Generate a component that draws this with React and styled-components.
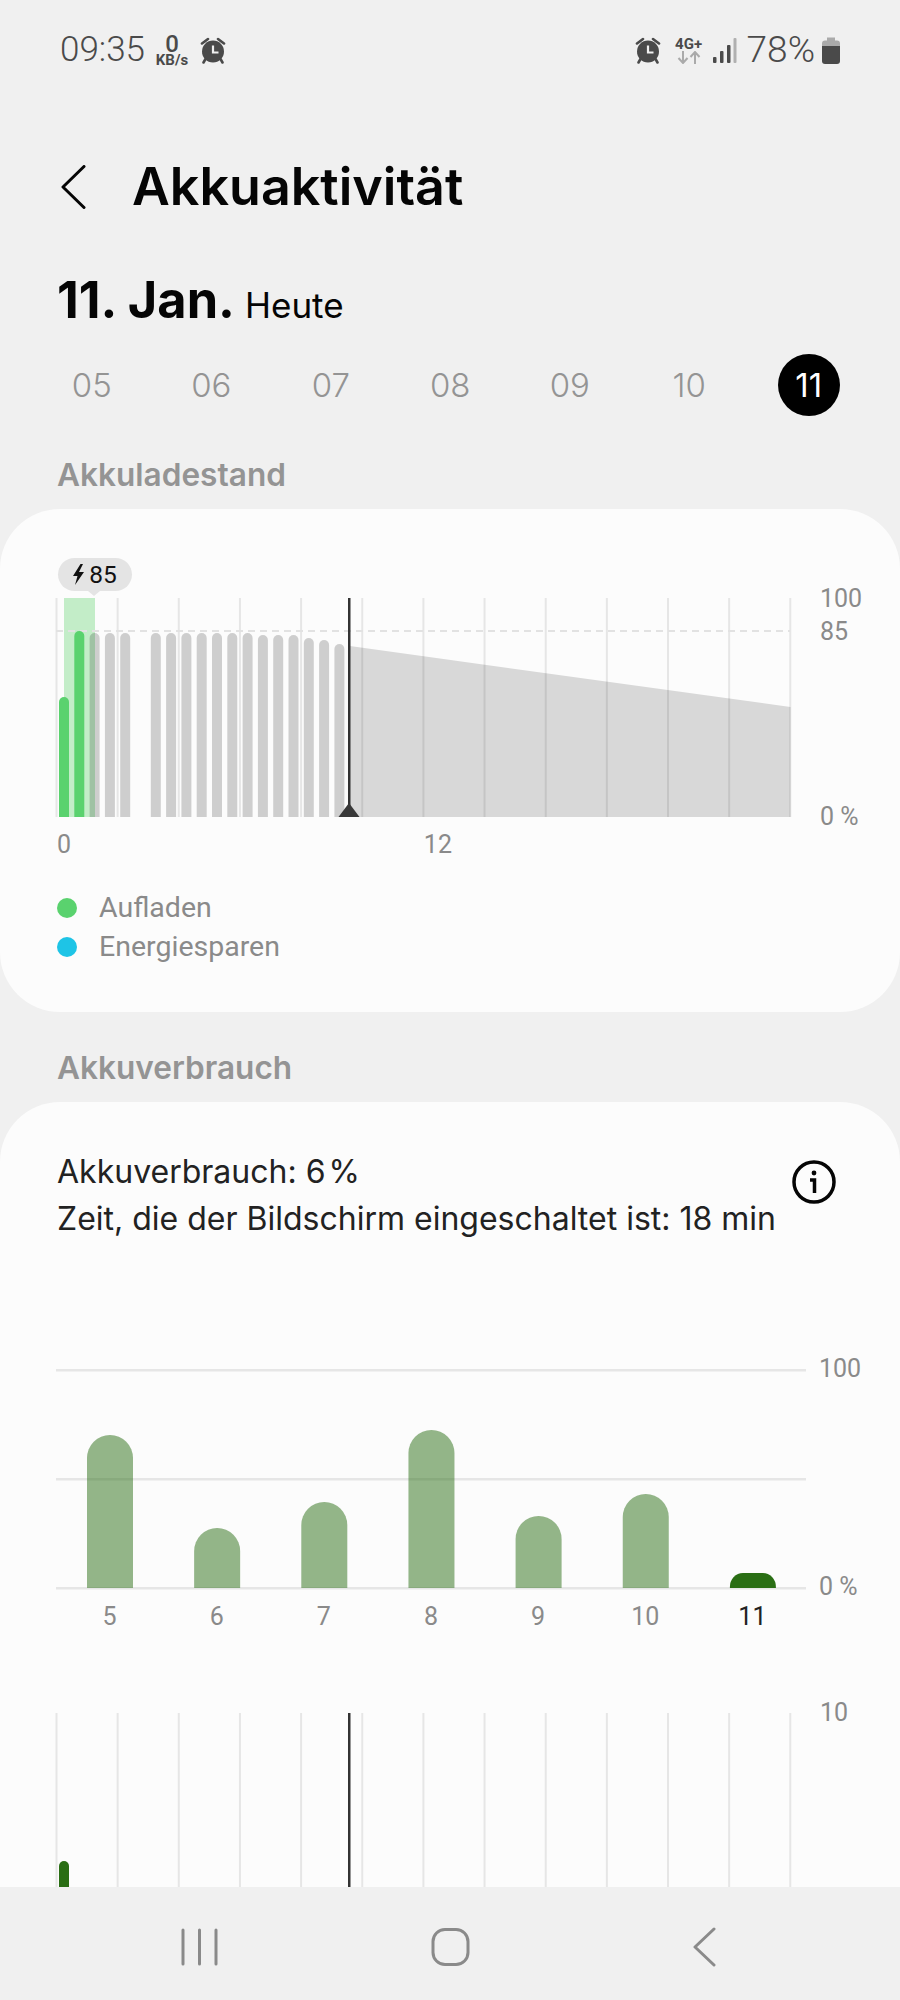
import styled, { createGlobalStyle } from "styled-components";

const GlobalStyle = createGlobalStyle`
  html, body {
    margin: 0;
    padding: 0;
    background: #f0f0f0;
  }
  * {
    box-sizing: border-box;
  }
`;

const Page = styled.div`
  width: 900px;
  height: 2000px;
  display: flex;
  flex-direction: column;
  background: #f0f0f0;
  font-family: Inter, "Liberation Sans", sans-serif;
  overflow: hidden;
`;
const Main = styled.main`
  flex: 1;
  min-height: 0;
  overflow: hidden;
`;

const StatusBar = styled.div`
  height: 100px;
  padding: 0 60px;
  display: flex;
  justify-content: space-between;
  align-items: center;
  color: #4a4a4a;
  font-family: Roboto, sans-serif;
`;
const StatusGroup = styled.div`
  display: flex;
  align-items: center;
`;
const StatusText = styled.span`
  font-size: 35px;
  line-height: 40px;
  font-weight: 300;
`;
const Percent = styled(StatusText)`
  margin-left: 10px;
  font-size: 37px;
`;
const Speed = styled.div`
  width: 34px;
  margin: 0 11px 0 10px;
  display: flex;
  flex-direction: column;
  align-items: center;
  font-weight: 700;
  font-size: 15px;
  line-height: 12px;
  b {
    font-size: 24px;
    line-height: 20px;
    font-weight: 500;
  }
`;
const Network = styled.div`
  width: 30px;
  margin: 0 9px 0 13px;
  display: flex;
  flex-direction: column;
  align-items: center;
  font-size: 15px;
  line-height: 14px;
  font-weight: 700;
`;

const Header = styled.header`
  height: 72px;
  margin-top: 51px;
  padding-left: 60px;
  display: flex;
  align-items: center;
  gap: 46px;
`;
const Title = styled.h1`
  margin: 0;
  font-size: 52px;
  line-height: 72px;
  font-weight: 600;
  color: #050505;
`;
const DateRow = styled.div`
  height: 56px;
  margin-top: 49px;
  padding-left: 57px;
  display: flex;
  align-items: baseline;
  gap: 10px;
  color: #050505;
`;
const DateText = styled.span`
  font-size: 50.5px;
  line-height: 56px;
  font-weight: 700;
`;
const DateNote = styled.span`
  font-size: 35px;
  line-height: 56px;
`;
const Days = styled.div`
  height: 62px;
  margin-top: 26px;
  padding-left: 32px;
  display: grid;
  grid-template-columns: repeat(7, 119.5px);
  align-items: center;
  justify-items: center;
`;
const Day = styled.span`
  width: 62px;
  height: 62px;
  display: flex;
  align-items: center;
  justify-content: center;
  border-radius: 50%;
  font-size: 33px;
  font-weight: ${(p) => (p.$active ? 400 : 300)};
  color: ${(p) => (p.$active ? "#fff" : "#949494")};
  background: ${(p) => (p.$active ? "#000" : "transparent")};
`;
const SectionTitle = styled.h2`
  height: 40px;
  margin: ${(p) => p.$top}px 0 ${(p) => p.$bottom}px;
  padding-left: 57px;
  font-size: 31.6px;
  line-height: 40px;
  font-weight: 600;
  color: #949494;
`;
const Card = styled.section`
  height: ${(p) => p.$height}px;
  padding-top: ${(p) => p.$pad}px;
  background: #fcfcfc;
  border-radius: 60px;
`;
const ChartRow = styled.div`
  margin-top: ${(p) => p.$top || 0}px;
  padding-left: 56px;
  display: flex;
  align-items: flex-start;
`;
const ChartBox = styled.div`
  position: relative;
  flex: none;
  width: ${(p) => p.$width}px;
  svg {
    display: block;
    overflow: visible;
  }
`;
const Tooltip = styled.div`
  position: absolute;
  left: 2px;
  top: -40px;
  width: 74px;
  height: 33px;
  display: flex;
  align-items: center;
  justify-content: center;
  gap: 5px;
  border-radius: 17px;
  background: #e4e4e4;
  color: #111;
  font-family: Roboto, sans-serif;
  font-size: 24.5px;
  &::after {
    content: "";
    position: absolute;
    left: 30px;
    bottom: -5px;
    border-left: 6px solid transparent;
    border-right: 6px solid transparent;
    border-top: 5px solid #e4e4e4;
  }
`;
const YAxis = styled.div`
  height: ${(p) => p.$height}px;
  margin: ${(p) => p.$top}px 0 0 ${(p) => p.$left}px;
  display: flex;
  flex-direction: column;
`;
const AxisLabel = styled.span`
  font-family: Roboto, sans-serif;
  font-size: 25px;
  line-height: 30px;
  color: #8a8a8a;
  margin-top: ${(p) => (p.$push ? "auto" : `${p.$gap || 0}px`)};
`;
const HoursAxis = styled.div`
  margin-top: -2px;
  padding-left: 57px;
  display: grid;
  grid-template-columns: repeat(12, 61.15px);
`;
const HourLabel = styled(AxisLabel)`
  grid-column: ${(p) => p.$col};
`;
const Legend = styled.ul`
  margin: 28px 0 0;
  padding: 0 0 0 57px;
  list-style: none;
`;
const LegendItem = styled.li`
  height: 39px;
  display: flex;
  align-items: center;
  gap: 22px;
  font-family: Roboto, sans-serif;
  font-size: 28.5px;
  color: #8a8a8a;
  &::before {
    content: "";
    width: 20px;
    height: 20px;
    border-radius: 50%;
    background: ${(p) => p.$color};
  }
`;
const UsageHead = styled.div`
  padding: 0 64px 0 57px;
  display: flex;
  justify-content: space-between;
  align-items: flex-start;
`;
const UsageText = styled.p`
  margin: 0;
  font-size: 32px;
  line-height: 47px;
  color: #222;
`;
const InfoIcon = styled.svg`
  flex: none;
  margin-top: 12px;
`;
const WeekAxis = styled.div`
  width: 750px;
  margin: 0 0 0 56px;
  display: grid;
  grid-template-columns: repeat(7, 1fr);
  justify-items: center;
`;
const WeekLabel = styled(AxisLabel)`
  color: ${(p) => (p.$active ? "#222" : "#8a8a8a")};
`;

const NavBar = styled.nav`
  flex: none;
  height: 113px;
  padding: 7px 0 0 181px;
  display: flex;
  align-items: center;
  background: #f0f0f0;
`;
const NavSlot = styled.div`
  width: ${(p) => p.$width}px;
  display: flex;
`;
const BatterySvg = styled.svg`
  margin-left: 7px;
`;

const GREY_INK = "#4a4a4a";
const GRID = "#e6e6e6";
const CHART_W = 736;
const CHART_H = 219;
const gridX = Array.from({ length: 13 }, (_, i) => 0.5 + i * 61.15);

// top of each bar in the charge chart, counted from the chart's top
const chargeBars = [99, 33, 35, 35, 35, null, 35, 35, 35, 35, 35, 35, 35, 37, 37, 37, 40, 42, 46];

const weekBars = [
  { label: "5", top: 67 },
  { label: "6", top: 160 },
  { label: "7", top: 134 },
  { label: "8", top: 62 },
  { label: "9", top: 148 },
  { label: "10", top: 126 },
  { label: "11", top: 205, active: true },
];

const topRounded = (x, y, w, bottom, rx, ry) =>
  `M${x} ${bottom}V${y + ry}A${rx} ${ry} 0 0 1 ${x + rx} ${y}H${x + w - rx}A${rx} ${ry} 0 0 1 ${x + w} ${y + ry}V${bottom}Z`;

const AlarmIcon = () => (
  <svg width="26" height="27" viewBox="0 0 26 27">
    <circle cx="13" cy="14.5" r="11" fill={GREY_INK} />
    <path d="M18 2l6 4.5M8 2L2 6.5M5.5 22l-2 3.5M20.5 22l2 3.5" stroke={GREY_INK} strokeWidth="2.6" strokeLinecap="round" />
    <path d="M13 8.5V15.5h5.5" fill="none" stroke="#f0f0f0" strokeWidth="2.2" />
  </svg>
);

const NetworkArrows = () => (
  <svg width="28" height="13" viewBox="0 0 28 13">
    <path d="M8 0v11M3.5 7l4.5 5 4.5-5M20 13V2M15.5 6L20 1l4.5 5" fill="none" stroke="#aaa" strokeWidth="2" />
  </svg>
);

const SignalIcon = () => (
  <svg width="24" height="25" viewBox="0 0 24 25">
    <rect x="0" y="19" width="3.5" height="6" rx="1" fill={GREY_INK} />
    <rect x="7" y="13" width="3.5" height="12" rx="1" fill={GREY_INK} />
    <rect x="14" y="7" width="3.5" height="18" rx="1" fill={GREY_INK} />
    <rect x="20.5" y="0" width="3" height="25" rx="1" fill="#b0b0b0" />
  </svg>
);

const BatteryIcon = () => (
  <BatterySvg width="18" height="27" viewBox="0 0 18 27">
    <path d="M5 0.5h8v3h2a3 3 0 0 1 3 3V10H0V6.5a3 3 0 0 1 3-3h2z" fill="#aaa" />
    <path d="M0 9h18v15a3 3 0 0 1-3 3H3a3 3 0 0 1-3-3z" fill={GREY_INK} />
  </BatterySvg>
);

const BackIcon = () => (
  <svg width="26" height="44" viewBox="0 0 26 44">
    <path d="M24 1.5L3 22l21 20.5" fill="none" stroke="#050505" strokeWidth="3" strokeLinecap="round" strokeLinejoin="round" />
  </svg>
);

const BoltIcon = () => (
  <svg width="11" height="21" viewBox="0 0 11 21">
    <path d="M7.5 0L0 12h4.5L2 21 11 8H6L10 0z" fill="#111" />
  </svg>
);

const ChargeChart = () => (
  <svg width={CHART_W} height={CHART_H} viewBox={`0 0 ${CHART_W} ${CHART_H}`}>
    {gridX.map((x) => (
      <rect key={x} x={x - 1} y="0" width="2" height={CHART_H} fill={GRID} />
    ))}
    <rect x="8" y="0" width="31" height={CHART_H} fill="#c3edc8" />
    <line x1="0" y1="33" x2="734" y2="33" stroke="#e2e2e2" strokeWidth="2" strokeDasharray="7 5" />
    {chargeBars.map((top, i) =>
      top === null ? null : (
        <path
          key={i}
          d={topRounded(3 + i * 15.3, top, 10, CHART_H, 5, 5)}
          fill={i < 2 ? "#5ad26e" : "rgba(0,0,0,0.18)"}
        />
      )
    )}
    <path d="M294 48L734.5 109V219H294z" fill="rgba(0,0,0,0.14)" />
    <rect x="292" y="0" width="2.5" height={CHART_H} fill="#333" />
    <path d="M293 205l10.5 14h-21z" fill="#383838" />
  </svg>
);

const WeekChart = () => (
  <svg width="750" height="224" viewBox="0 0 750 224">
    {[2, 111, 220].map((y) => (
      <rect key={y} x="0" y={y - 1} width="750" height="2.5" fill={GRID} />
    ))}
    {weekBars.map((bar, i) => (
      <path
        key={bar.label}
        d={topRounded(31 + i * 107.15, bar.top, 46, 220, bar.active ? 13 : 23, bar.active ? 14 : 23)}
        fill={bar.active ? "#2a6e14" : "rgba(42,110,20,0.5)"}
      />
    ))}
  </svg>
);

const ScreenChart = () => (
  <svg width={CHART_W} height="176" viewBox={`0 0 ${CHART_W} 176`}>
    {gridX.map((x) => (
      <rect key={x} x={x - 1} y="0" width="2" height="176" fill={GRID} />
    ))}
    <path d={topRounded(3, 148, 10, 176, 5, 5)} fill="#2a6e14" />
    <rect x="292" y="0" width="2.5" height="176" fill="#333" />
  </svg>
);

const NavIcon = ({ children, width }) => (
  <svg width={width} height="40" viewBox={`0 0 ${width} 40`}>
    <g fill="none" stroke="#8a8a8a" strokeWidth="3" strokeLinecap="round" strokeLinejoin="round">
      {children}
    </g>
  </svg>
);

const App = () => {
  return (
    <Page>
      <GlobalStyle />
      <Main>
        <StatusBar>
          <StatusGroup>
            <StatusText>09:35</StatusText>
            <Speed>
              <b>0</b>
              KB/s
            </Speed>
            <AlarmIcon />
          </StatusGroup>
          <StatusGroup>
            <AlarmIcon />
            <Network>
              4G+
              <NetworkArrows />
            </Network>
            <SignalIcon />
            <Percent>78%</Percent>
            <BatteryIcon />
          </StatusGroup>
        </StatusBar>

        <Header>
          <BackIcon />
          <Title>Akkuaktivität</Title>
        </Header>
        <DateRow>
          <DateText>11. Jan.</DateText>
          <DateNote>Heute</DateNote>
        </DateRow>
        <Days>
          {["05", "06", "07", "08", "09", "10"].map((d) => (
            <Day key={d}>{d}</Day>
          ))}
          <Day $active>11</Day>
        </Days>

        <SectionTitle $top={39} $bottom={14}>
          Akkuladestand
        </SectionTitle>
        <Card $height={503} $pad={89}>
          <ChartRow>
            <ChartBox $width={CHART_W}>
              <Tooltip>
                <BoltIcon />
                85
              </Tooltip>
              <ChargeChart />
            </ChartBox>
            <YAxis $height={248.5} $top={-14.5} $left={28}>
              <AxisLabel>100</AxisLabel>
              <AxisLabel $gap={3}>85</AxisLabel>
              <AxisLabel $push>0 %</AxisLabel>
            </YAxis>
          </ChartRow>
          <HoursAxis>
            <HourLabel $col={1}>0</HourLabel>
            <HourLabel $col={7}>12</HourLabel>
          </HoursAxis>
          <Legend>
            <LegendItem $color="#5ad26e">Aufladen</LegendItem>
            <LegendItem $color="#1ec4e6">Energiesparen</LegendItem>
          </Legend>
        </Card>

        <SectionTitle $top={36} $bottom={14}>
          Akkuverbrauch
        </SectionTitle>
        <Card $height={900} $pad={46}>
          <UsageHead>
            <UsageText>
              Akkuverbrauch: 6{"\u200a"}%
              <br />
              Zeit, die der Bildschirm eingeschaltet ist: 18 min
            </UsageText>
            <InfoIcon width="44" height="44" viewBox="0 0 44 44">
              <circle cx="22" cy="22" r="20" fill="none" stroke="#050505" strokeWidth="3.5" />
              <circle cx="22" cy="13" r="2.4" fill="#050505" />
              <path d="M18 20h4.5v13" fill="none" stroke="#050505" strokeWidth="3.5" />
            </InfoIcon>
          </UsageHead>
          <ChartRow $top={126}>
            <ChartBox $width={750}>
              <WeekChart />
            </ChartBox>
            <YAxis $height={248} $top={-14} $left={13}>
              <AxisLabel>100</AxisLabel>
              <AxisLabel $push>0 %</AxisLabel>
            </YAxis>
          </ChartRow>
          <WeekAxis>
            {weekBars.map((bar) => (
              <WeekLabel key={bar.label} $active={bar.active}>
                {bar.label}
              </WeekLabel>
            ))}
          </WeekAxis>
          <ChartRow $top={81}>
            <ChartBox $width={CHART_W}>
              <ScreenChart />
            </ChartBox>
            <YAxis $height={30} $top={-15.5} $left={28}>
              <AxisLabel>10</AxisLabel>
            </YAxis>
          </ChartRow>
        </Card>
      </Main>

      <NavBar>
        <NavSlot $width={250}>
          <NavIcon width={38}>
            <path d="M2 3v34M18.5 3v34M35 3v34" />
          </NavIcon>
        </NavSlot>
        <NavSlot $width={262}>
          <NavIcon width={40}>
            <rect x="2" y="2.5" width="35" height="35" rx="12" />
          </NavIcon>
        </NavSlot>
        <NavSlot $width={30}>
          <NavIcon width={24}>
            <path d="M21 2L2 20l19 18" />
          </NavIcon>
        </NavSlot>
      </NavBar>
    </Page>
  );
};

export default App;
